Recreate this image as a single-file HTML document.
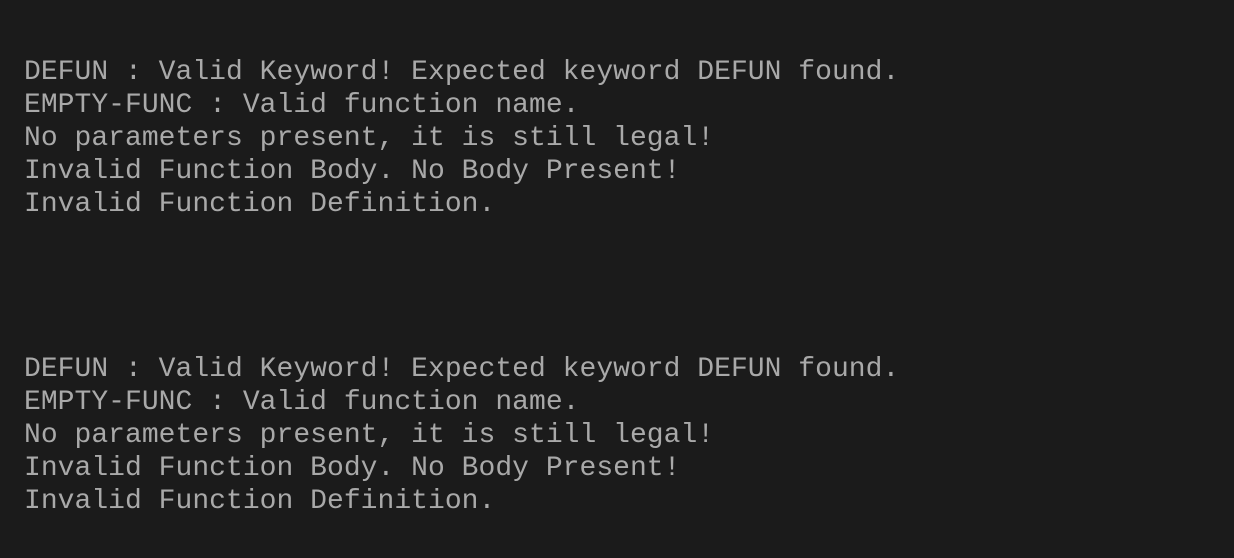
<!DOCTYPE html>
<html><head><style>
html,body{margin:0;padding:0;background:#1b1b1b;width:1234px;height:558px;overflow:hidden}
.b{position:absolute;left:24px;font-family:"Liberation Mono",monospace;font-size:28px;line-height:33px;color:#a9a9a9;white-space:pre;letter-spacing:0.03px}
</style></head><body>
<div class="b" style="top:56px">DEFUN : Valid Keyword! Expected keyword DEFUN found.
EMPTY-FUNC : Valid function name.
No parameters present, it is still legal!
Invalid Function Body. No Body Present!
Invalid Function Definition.</div>
<div class="b" style="top:353px">DEFUN : Valid Keyword! Expected keyword DEFUN found.
EMPTY-FUNC : Valid function name.
No parameters present, it is still legal!
Invalid Function Body. No Body Present!
Invalid Function Definition.</div>
</body></html>
